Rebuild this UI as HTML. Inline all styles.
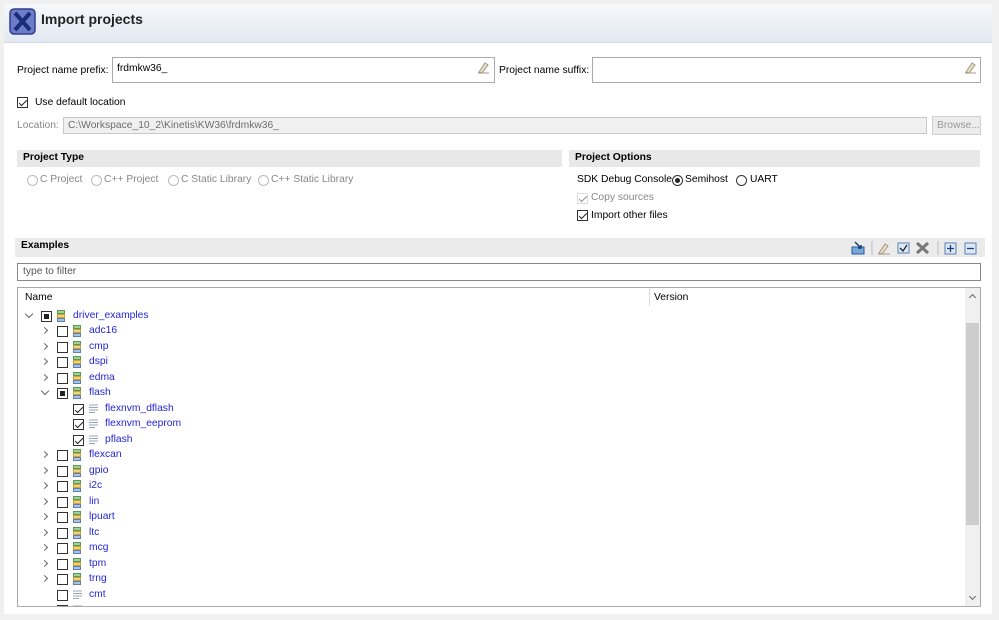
<!DOCTYPE html>
<html><head><meta charset="utf-8"><style>
*{box-sizing:border-box;margin:0;padding:0}
body{width:999px;height:620px;background:#f0f0f0;font-family:"Liberation Sans",sans-serif;font-size:10.3px;color:#000;position:relative;overflow:hidden}
.a{position:absolute;white-space:nowrap}
.cb{position:absolute;width:11px;height:11px;border:1px solid #333;background:#fff}
.ck::after{content:"";position:absolute;left:3px;top:0px;width:3px;height:7px;border:solid #222;border-width:0 1.5px 1.5px 0;transform:rotate(45deg)}
.pt::after{content:"";position:absolute;left:2px;top:2px;width:5px;height:5px;background:#222}
.rad{position:absolute;width:11px;height:11px;border:1px solid #333;border-radius:50%;background:#fff}
.bar{position:absolute;background:#e8e8e8;font-weight:bold;padding:2px 6px;height:17px}
.lnk{color:#2424d6}
.chev{position:absolute;width:6px;height:6px;border:solid #666;border-width:0 1.3px 1.3px 0}
.r{transform:rotate(-45deg)}.d{transform:rotate(45deg)}
</style></head><body>
<div class="a" style="left:4px;top:4px;width:988px;height:610px;background:#fff"></div>
<div class="a" style="left:4px;top:4px;width:988px;height:39px;background:linear-gradient(#f6f8fb,#e3e9f2);border-bottom:1px solid #d4dbe6"></div>
<svg class="a" style="left:9px;top:8px" width="27" height="27"><rect x="1" y="1" width="25" height="25" rx="4" fill="#6c7cc8" stroke="#2f3e8a" stroke-width="1.5"/><path d="M6 5L21 22M21 5L6 22" stroke="#1c2a78" stroke-width="4"/></svg>
<div class="a" style="left:41px;top:11px;font-size:14px;font-weight:bold;color:#222">Import projects</div>

<div class="a" style="left:17px;top:65px">Project name prefix:</div>
<div class="a" style="left:112px;top:57px;width:383px;height:26px;border:1px solid #aaa;padding:5px 4px">frdmkw36_</div>
<div class="a" style="left:499px;top:65px">Project name suffix:</div>
<div class="a" style="left:592px;top:57px;width:389px;height:26px;border:1px solid #aaa"></div>
<svg class="a" style="left:476px;top:61px" width="14" height="14"><path d="M3 11L9 2L12 4L6 12Z" fill="#e8dccb" stroke="#a89880"/><path d="M2 12H13" stroke="#a89880"/></svg>
<svg class="a" style="left:963px;top:61px" width="14" height="14"><path d="M3 11L9 2L12 4L6 12Z" fill="#e8dccb" stroke="#a89880"/><path d="M2 12H13" stroke="#a89880"/></svg>

<div class="cb ck" style="left:17px;top:97px"></div>
<div class="a" style="left:35px;top:97px">Use default location</div>
<div class="a" style="left:17px;top:120px;color:#888">Location:</div>
<div class="a" style="left:63px;top:117px;width:864px;height:17px;border:1px solid #c8c8c8;background:#f0f0f0;color:#6d6d6d;padding:2px 4px">C:\Workspace_10_2\Kinetis\KW36\frdmkw36_</div>
<div class="a" style="left:932px;top:116px;width:49px;height:19px;border:1px solid #cfcfcf;background:#ececec;color:#999;padding:3px 4px">Browse...</div>

<div class="bar" style="left:17px;top:150px;width:545px">Project Type</div>
<div class="bar" style="left:569px;top:150px;width:411px">Project Options</div>
<div class="rad" style="left:27px;top:175px;border-color:#bbb"></div><div class="a" style="left:40px;top:174px;color:#888">C Project</div>
<div class="rad" style="left:91px;top:175px;border-color:#bbb"></div><div class="a" style="left:104px;top:174px;color:#888">C++ Project</div>
<div class="rad" style="left:168px;top:175px;border-color:#bbb"></div><div class="a" style="left:181px;top:174px;color:#888">C Static Library</div>
<div class="rad" style="left:258px;top:175px;border-color:#bbb"></div><div class="a" style="left:271px;top:174px;color:#888">C++ Static Library</div>

<div class="a" style="left:577px;top:174px">SDK Debug Console</div>
<div class="rad" style="left:672px;top:175px"><div style="position:absolute;left:2px;top:2px;width:5px;height:5px;border-radius:50%;background:#222"></div></div>
<div class="a" style="left:685px;top:174px">Semihost</div>
<div class="rad" style="left:736px;top:175px"></div><div class="a" style="left:750px;top:174px">UART</div>
<div class="cb ck" style="left:577px;top:193px;border-color:#bbb;opacity:.5"></div><div class="a" style="left:591px;top:192px;color:#888">Copy sources</div>
<div class="cb ck" style="left:577px;top:210px"></div><div class="a" style="left:591px;top:210px">Import other files</div>

<div class="bar" style="left:15px;top:238px;width:970px;height:19px;background:#ebebeb">Examples</div>
<svg class="a" style="left:850px;top:240px" width="130" height="16">
<path d="M2 7H14V14H2Z" fill="#7aa6d8" stroke="#2a5c9a"/><path d="M5 2L11 8M11 5V8H8" stroke="#1a3f7a" fill="none" stroke-width="1.5"/>
<path d="M22 1V15" stroke="#bbb"/>
<path d="M29 13L35 4L38 6L32 14Z" fill="#e8dccb" stroke="#a89880"/><path d="M28 14H40" stroke="#a89880"/>
<rect x="48" y="3" width="11" height="10" fill="#dde8f6" stroke="#5a7fb0"/><path d="M50 8L53 11L57 5" stroke="#223" fill="none" stroke-width="1.3"/>
<path d="M67 3L78 13M78 3L67 13" stroke="#777" stroke-width="3"/>
<path d="M88 1V15" stroke="#bbb"/>
<rect x="95" y="3" width="11" height="11" fill="#dde8f6" stroke="#5a7fb0"/><path d="M100.5 5V12M97 8.5H104" stroke="#1a3f7a" stroke-width="1.3"/>
<rect x="115" y="3" width="11" height="11" fill="#dde8f6" stroke="#5a7fb0"/><path d="M117 8.5H124" stroke="#1a3f7a" stroke-width="1.3"/>
</svg>
<div class="a" style="left:17px;top:263px;width:964px;height:18px;border:1px solid #888;color:#555;padding:2px 5px">type to filter</div>

<div class="a" style="left:17px;top:287px;width:964px;height:320px;border:1px solid #aaa;background:#fff;overflow:hidden">
<div class="a" style="left:7px;top:4px">Name</div>
<div class="a" style="left:631px;top:0px;width:1px;height:18px;background:#ddd"></div>
<div class="a" style="left:636px;top:4px">Version</div>
<div id="tree" class="a" style="left:-18px;top:-288px;width:999px;height:620px"></div>
<div class="a" style="left:947px;top:0px;width:15px;height:318px;background:#f0f0f0"></div>
<div class="a" style="left:948px;top:35px;width:13px;height:202px;background:#cdcdcd"></div>
<div class="chev" style="left:952px;top:7px;transform:rotate(225deg);width:5px;height:5px"></div>
<div class="chev d" style="left:952px;top:306px;width:5px;height:5px"></div>
</div>
<script>
var rows=[[0,'d','p','driver_examples',1],[1,'r','','adc16',1],[1,'r','','cmp',1],[1,'r','','dspi',1],[1,'r','','edma',1],[1,'d','p','flash',1],[2,'','c','flexnvm_dflash',0],[2,'','c','flexnvm_eeprom',0],[2,'','c','pflash',0],[1,'r','','flexcan',1],[1,'r','','gpio',1],[1,'r','','i2c',1],[1,'r','','lin',1],[1,'r','','lpuart',1],[1,'r','','ltc',1],[1,'r','','mcg',1],[1,'r','','tpm',1],[1,'r','','trng',1],[1,'','','cmt',0],[1,'','','',0]];
var h='';rows.forEach(function(r,i){var y=309.5+i*15.5;var x=16*r[0];
if(r[1]=='r')h+='<div class="chev r" style="left:'+(x+26)+'px;top:'+(y+3)+'px;width:5px;height:5px"></div>';
if(r[1]=='d')h+='<div class="chev d" style="left:'+(x+26)+'px;top:'+(y+1)+'px"></div>';
h+='<div class="cb '+(r[2]=='p'?'pt':r[2]=='c'?'ck':'')+'" style="left:'+(x+41)+'px;top:'+(y+1)+'px"></div>';
if(r[4])h+='<svg class="a" style="left:'+(x+57)+'px;top:'+y+'px" width="8" height="13"><rect x="0.5" y="0.5" width="7" height="3" fill="#9ed09a" stroke="#5a9a55"/><rect x="0.5" y="4.5" width="7" height="3" fill="#f2d27a" stroke="#c9a33a"/><rect x="0.5" y="8.5" width="7" height="3" fill="#a9c4ea" stroke="#5a7fb0"/></svg>';
else h+='<svg class="a" style="left:'+(x+57)+'px;top:'+y+'px" width="10" height="13"><path d="M0 2H9M0 4.5H9M0 7H9M0 9.5H6" stroke="#9aa6b8"/></svg>';
h+='<div class="a lnk" style="left:'+(x+73)+'px;top:'+y+'px">'+r[3]+'</div>';});
document.getElementById('tree').innerHTML=h;
</script>
</body></html>
